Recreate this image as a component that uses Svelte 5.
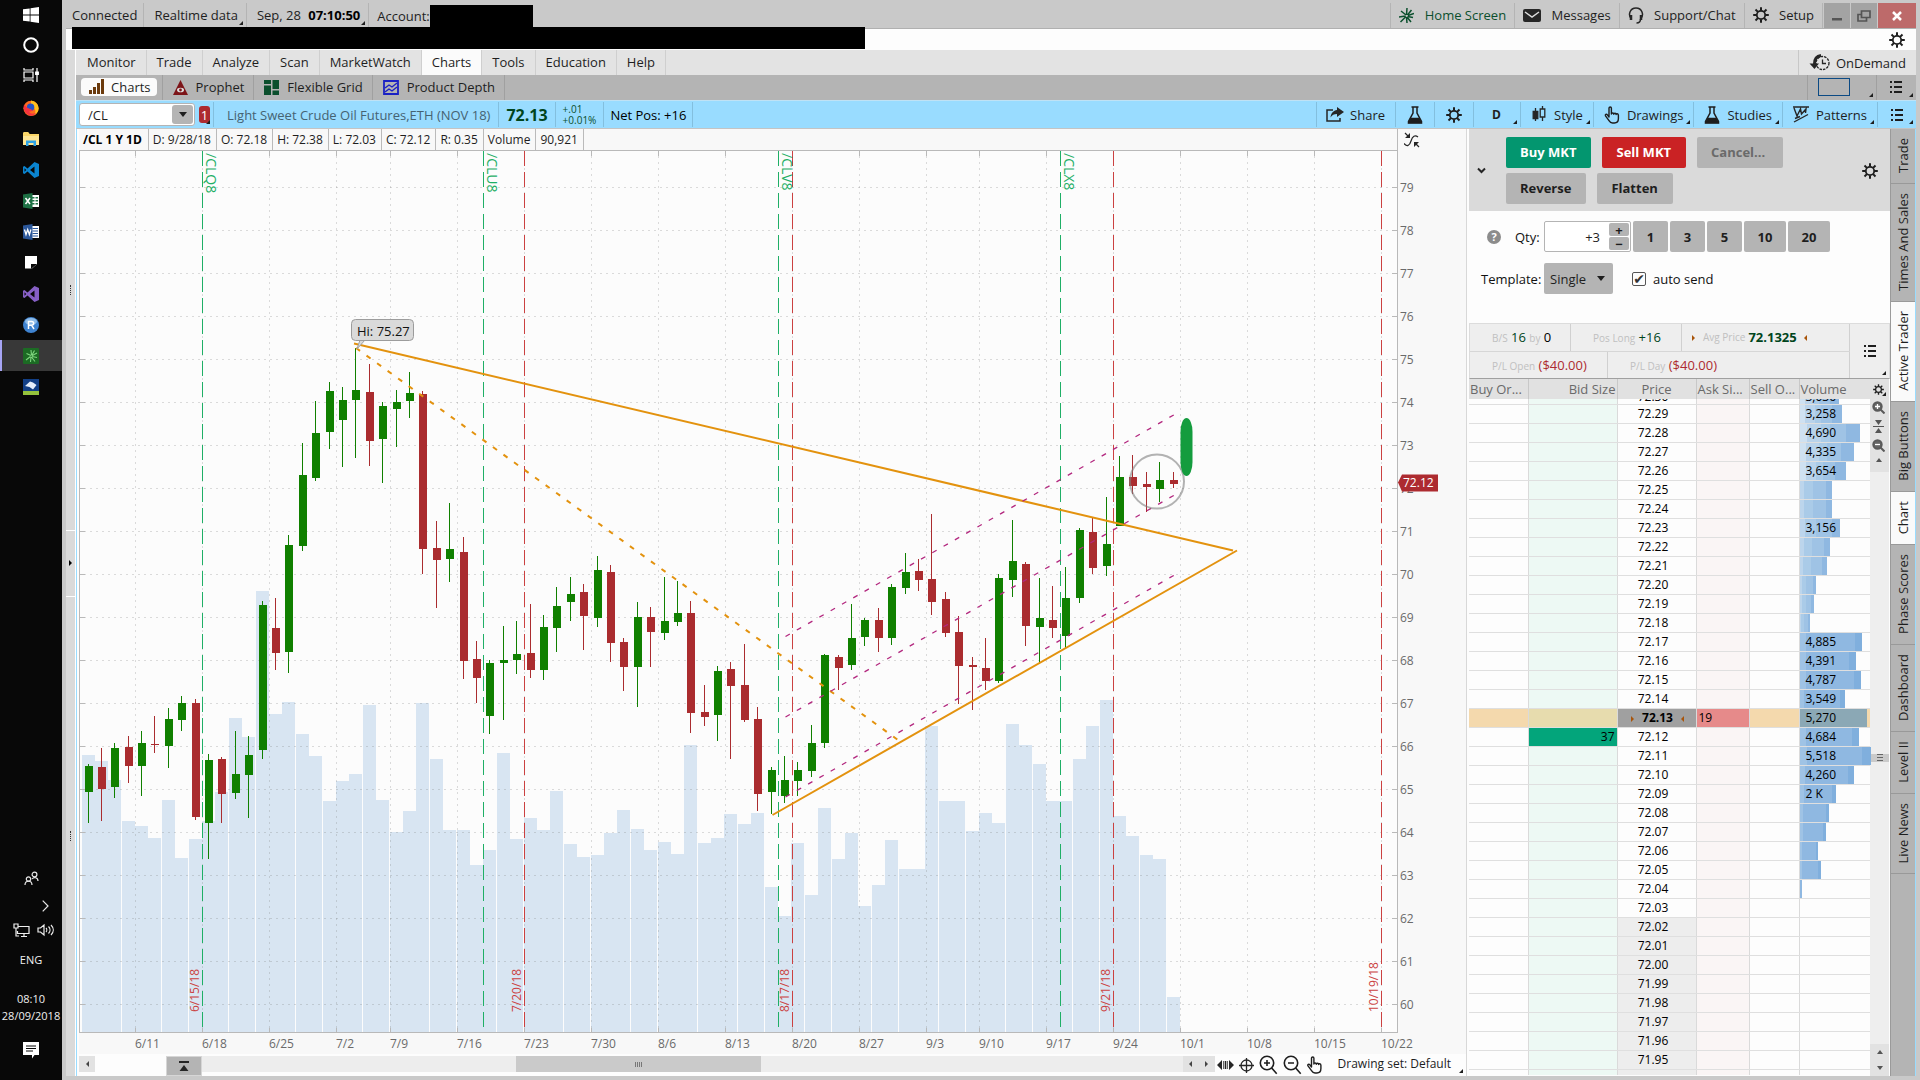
<script lang="ts">
  type Candle = [up: number, high: number, bodyTop: number, bodyBottom: number, low: number, volume: number];

  let symbol = $state('/CL');
  let qty = $state('+3');
  let template = $state('Single');
  let autoSend = $state(true);

  const menu = ['Monitor', 'Trade', 'Analyze', 'Scan', 'MarketWatch', 'Charts', 'Tools', 'Education', 'Help'];
  const info = ['D: 9/28/18', 'O: 72.18', 'H: 72.38', 'L: 72.03', 'C: 72.12', 'R: 0.35', 'Volume', '90,921'];
  const sizes = [1, 3, 5, 10, 20];
  const sideTabs = ['Trade', 'Times And Sales', 'Active Trader', 'Big Buttons', 'Chart', 'Phase Scores', 'Dashboard', 'Level II', 'Live News'];
  const openTabs = ['Active Trader', 'Chart'];

  // one entry per session: direction, wick top, body top, body bottom, wick bottom, volume top
  const candles: Candle[] = [
    [1, 764, 766, 792, 823, 755], [0, 748, 767, 789, 821, 761], [1, 743, 748, 787, 798, 780],
    [0, 736, 747, 766, 783, 821], [1, 731, 743, 766, 796, 826], [0, 716, 744, 745, 753, 838],
    [1, 708, 719, 746, 768, 800], [1, 696, 703, 720, 731, 858], [0, 699, 703, 817, 820, 839],
    [1, 754, 760, 823, 859, 821], [0, 757, 759, 794, 823, 792], [1, 731, 774, 793, 799, 718],
    [1, 736, 755, 775, 818, 737], [1, 601, 605, 750, 759, 591], [0, 598, 628, 653, 670, 714],
    [1, 535, 545, 652, 673, 702], [1, 443, 475, 546, 551, 734], [1, 401, 433, 478, 481, 756],
    [1, 382, 391, 432, 449, 801], [1, 387, 400, 420, 467, 781], [1, 348, 390, 400, 458, 774],
    [0, 364, 392, 441, 466, 705], [1, 402, 406, 439, 483, 800], [1, 390, 402, 409, 447, 832],
    [1, 372, 393, 401, 418, 811], [0, 391, 394, 549, 574, 703], [0, 521, 548, 560, 608, 759],
    [1, 503, 549, 559, 582, 830], [0, 537, 552, 661, 679, 830], [0, 641, 659, 678, 703, 865],
    [1, 660, 663, 716, 734, 850], [1, 626, 660, 663, 720, 753], [1, 621, 654, 660, 674, 839],
    [0, 604, 653, 670, 678, 818], [1, 615, 627, 670, 680, 830], [1, 587, 606, 628, 652, 791],
    [1, 577, 594, 602, 621, 844], [0, 584, 592, 616, 650, 857], [1, 556, 570, 618, 627, 855],
    [0, 565, 572, 643, 662, 833], [0, 638, 642, 667, 691, 810], [1, 602, 617, 667, 707, 829],
    [0, 607, 617, 632, 667, 850], [1, 577, 621, 633, 640, 842], [1, 581, 613, 622, 626, 854],
    [0, 601, 613, 713, 733, 745], [0, 685, 712, 717, 726, 843], [1, 666, 671, 715, 741, 838],
    [0, 662, 669, 686, 759, 814], [0, 644, 685, 720, 722, 824], [0, 707, 719, 794, 811, 813],
    [1, 767, 770, 792, 814, 887], [1, 756, 780, 796, 803, 916], [1, 762, 770, 781, 796, 843],
    [1, 725, 743, 771, 777, 895], [1, 654, 655, 743, 748, 808], [0, 655, 657, 668, 690, 859],
    [1, 604, 638, 665, 670, 833], [1, 618, 620, 637, 646, 906], [0, 608, 620, 638, 652, 885],
    [1, 584, 587, 638, 645, 840], [1, 553, 572, 588, 594, 869], [0, 559, 571, 580, 591, 869],
    [0, 514, 579, 602, 615, 726], [0, 592, 599, 633, 637, 801], [0, 616, 632, 666, 704, 801],
    [0, 657, 665, 667, 710, 831], [0, 638, 668, 681, 690, 813], [1, 574, 578, 681, 683, 823],
    [1, 520, 561, 580, 597, 724], [0, 562, 564, 626, 646, 745], [1, 578, 618, 627, 664, 764],
    [0, 586, 620, 628, 638, 801], [1, 567, 598, 636, 649, 801], [1, 528, 530, 598, 603, 759],
    [0, 518, 532, 568, 574, 726], [1, 497, 544, 566, 576, 700], [1, 456, 477, 526, 526, 816],
    [0, 455, 477, 486, 494, 836], [0, 472, 484, 487, 512, 855], [1, 462, 480, 489, 502, 859],
    [0, 472, 480, 484, 488, 997]
  ];
  const bars = candles.map((c, i) => ({
    x: Math.floor(88.02 + i * 13.395),
    color: c[0] ? '#108000' : '#aa2c2f',
    high: c[1], top: c[2], bottom: c[3], low: c[4], volume: c[5]
  }));

  const weeks: [string, number][] = [
    ['6/11', 135], ['6/18', 202], ['6/25', 269], ['7/2', 336], ['7/9', 390], ['7/16', 457], ['7/23', 524],
    ['7/30', 591], ['8/6', 658], ['8/13', 725], ['8/20', 792], ['8/27', 859], ['9/3', 926], ['9/10', 979],
    ['9/17', 1046], ['9/24', 1113], ['10/1', 1180], ['10/8', 1247], ['10/15', 1314], ['10/22', 1381]
  ];
  const prices = Array.from({ length: 20 }, (_, i) => ({ label: 79 - i, y: 187 + i * 43 }));
  const expirations: [string, number][] = [['6/15/18', 202], ['7/20/18', 524], ['8/17/18', 792], ['9/21/18', 1113], ['10/19/18', 1381]];
  const contracts: [string, number][] = [['/CLQ8', 202], ['/CLU8', 483], ['/CLV8', 778], ['/CLX8', 1060]];

  // price ladder, top row is 72.29
  const ladderVolume: [string, number][] = [
    ['3,258', 42], ['4,690', 60], ['4,335', 54], ['3,654', 46], ['', 32], ['', 32], ['3,156', 40], ['', 30], ['', 27],
    ['', 16], ['', 14], ['', 10], ['4,885', 62], ['4,391', 56], ['4,787', 61], ['3,549', 45], ['5,270', 67],
    ['4,684', 59], ['5,518', 71], ['4,260', 54], ['2 K', 36], ['', 29], ['', 26], ['', 18], ['', 21], ['', 2]
  ];
  const ladder = Array.from({ length: 35 }, (_, i) => ({
    price: (72.29 - i * 0.01).toFixed(2),
    bid: i === 17 ? '37' : '',
    ask: i === 16 ? '19' : '',
    volume: ladderVolume[i]?.[0] ?? '',
    width: ladderVolume[i]?.[1] ?? 0,
    tone: i < 4 ? 'pale' : i < 12 ? 'soft' : 'full',
    last: i === 16,
    outside: i > 26
  }));
</script>

{#snippet gear(size = 16)}
  <svg width={size} height={size} viewBox="0 0 16 16" fill="none" stroke="currentColor">
    <circle cx="8" cy="8" r="4.200" stroke-width="1.8" />
    <path d="M8 .2v3.300M8 12.500v3.300M.2 8h3.300M12.500 8h3.300M2.500 2.500l2.400 2.400M11.100 11.100l2.400 2.400M2.500 13.500l2.400-2.400M11.100 4.900l2.400-2.400" stroke-width="2" />
  </svg>
{/snippet}

{#snippet listIcon()}
  <svg width="12" height="12" viewBox="0 0 12 12" fill="currentColor">
    <path d="M0 0h2v2H0zM0 5h2v2H0zM0 10h2v2H0zM4 0h8v2H4zM4 5h8v2H4zM4 10h8v2H4z" />
  </svg>
{/snippet}

{#snippet flask()}
  <svg width="16" height="18" viewBox="0 0 16 18" fill="none" stroke="currentColor" stroke-width="1.5">
    <path d="M4.500 1h7M6 1v6L1.500 15.500v1.500h13v-1.500L10 7V1" />
    <path d="M4 12.500h8l2 4H2z" fill="currentColor" />
  </svg>
{/snippet}

{#snippet hand()}
  <svg width="15" height="18" viewBox="0 0 15 18" fill="none" stroke="currentColor" stroke-width="1.4" stroke-linejoin="round">
    <path d="M4.500 11V2.200c0-1.700 2.400-1.700 2.400 0V8c0-1.400 2.400-1.400 2.400.2 0-1.300 2.300-1.200 2.300.4 0-1.200 2.300-1.100 2.300.6v3.300c0 3-1.500 4.500-4 4.500H8c-1.600 0-2.600-.8-3.500-2.300L1 9.900c-.7-1.300.9-2.200 1.900-1z" />
  </svg>
{/snippet}

{#snippet magnifier(plus: boolean)}
  <svg width="19" height="20" viewBox="0 0 19 20" fill="none" stroke="currentColor" stroke-width="1.6">
    <circle cx="8" cy="8" r="6.700" />
    <path d="M12.700 13l5 5.800M5 8h6" />
    {#if plus}<path d="M8 5v6" />{/if}
  </svg>
{/snippet}

<div class="desktop">
  <nav class="taskbar" aria-label="Taskbar">
    <button class="tall" aria-label="Start">
      <svg width="16" height="16" viewBox="0 0 16 16" fill="#fff"><path d="M0 2.300 6.700 1.400v6.200H0zM7.500 1.300 16 0v7.600H7.500zM0 8.400h6.700v6.200L0 13.700zM7.500 8.400H16V16l-8.500-1.300z" /></svg>
    </button>
    <button class="tall" aria-label="Search">
      <svg width="16" height="16" viewBox="0 0 16 16" fill="none" stroke="#fff" stroke-width="2"><circle cx="8" cy="8" r="6.800" /></svg>
    </button>
    <button class="tall" aria-label="Task view">
      <svg width="16" height="16" viewBox="0 0 16 16" fill="none" stroke="#fff" stroke-width="1.200"><path d="M1 1v2h9V1M1 15v-2h9v2M1 5h9v6H1zM14 1v14" /><path d="M12.700 5h2.600v2.500h-2.600z" fill="#fff" /></svg>
    </button>
    <button aria-label="Firefox">
      <svg width="16" height="16" viewBox="0 0 16 16"><circle cx="8" cy="8.300" r="7.600" fill="#ff6a1f" /><path d="M8 .6c5 1 7.600 4 7.600 8 0 3-2 5.700-4.700 6.800C14 11 12 8 8 5z" fill="#ffc01e" /><circle cx="7.600" cy="7.200" r="3.700" fill="#2554c7" /><path d="M1 4.500C0 9 1.500 14.500 8 15.800c3 0 4.500-1.500 5-3-3 1.600-6 1-7-1.300 2 .3 2.800-.8 4-1-2-2-5-1.500-6.500-3.500z" fill="#f5333f" /></svg>
    </button>
    <button aria-label="File Explorer">
      <svg width="16" height="14" viewBox="0 0 16 14"><path d="M0 1.500C0 .7.5 0 1.200 0h4l1.500 2H16v11H0z" fill="#fbd667" /><path d="M0 4h16v9H0z" fill="#ffe694" /><path d="M3 14V8.500h10V14h-2.500v-3h-5v3z" fill="#2ea3e6" /></svg>
    </button>
    <button aria-label="Visual Studio Code">
      <svg width="16" height="16" viewBox="0 0 16 16" fill="#0a84d0"><path d="M11.500 0 16 2v12l-4.500 2L4.500 9.500 1.500 12 0 11.200V4.800L1.500 4l3 2.500zM11.500 4.600 7 8l4.500 3.400zM1.500 6.300v3.400L3.200 8z" fill-rule="evenodd" /></svg>
    </button>
    <button aria-label="Excel">
      <svg width="16" height="16" viewBox="0 0 16 16"><path d="M8 2h8v12H8z" fill="#fff" /><path d="M9 4h2.500v1.500H9zM12.500 4H15v1.500h-2.500zM9 7h2.500v1.500H9zM12.500 7H15v1.500h-2.500zM9 10h2.500v1.500H9zM12.500 10H15v1.500h-2.500z" fill="#217346" /><path d="M0 1.500 9.500 0v16L0 14.500z" fill="#1d7044" /><path d="m2.500 5 4.500 6M7 5l-4.500 6" stroke="#fff" stroke-width="1.500" /></svg>
    </button>
    <button aria-label="Word">
      <svg width="16" height="16" viewBox="0 0 16 16"><path d="M8 2h8v12H8z" fill="#fff" /><path d="M9.500 4.500H15M9.500 7H15M9.500 9.500H15M9.500 12H15" stroke="#2b579a" /><path d="M0 1.500 9.500 0v16L0 14.500z" fill="#2b579a" /><path d="m1.500 5.500 1.500 5 1.700-5 1.700 5 1.500-5" stroke="#fff" stroke-width="1.300" fill="none" /></svg>
    </button>
    <button aria-label="Sticky Notes">
      <svg width="12" height="13" viewBox="0 0 12 13"><path d="M0 0h12v8L7 12.500H0z" fill="#fff" /><path d="M6 8h6l-6 5z" fill="#080808" /></svg>
    </button>
    <button aria-label="Visual Studio">
      <svg width="16" height="16" viewBox="0 0 16 16" fill="#865fc5"><path d="M11.500 0 16 2v12l-4.500 2L4.500 9.500 1.500 12 0 11.200V4.800L1.500 4l3 2.500zM11.500 4.600 7 8l4.500 3.400zM1.500 6.300v3.400L3.200 8z" fill-rule="evenodd" /></svg>
    </button>
    <button aria-label="RStudio">
      <svg width="16" height="16" viewBox="0 0 16 16"><circle cx="8" cy="8" r="8" fill="#3f83d0" /><ellipse cx="8" cy="4.500" rx="6" ry="3.500" fill="#8fbce9" /><path d="M5.500 12V4.500h3.200c2.600 0 2.600 3.700 0 3.700H5.500m3 0 2.500 3.800" stroke="#fff" stroke-width="1.500" fill="none" /></svg>
    </button>
    <button class="running" aria-label="Thinkorswim">
      <svg width="16" height="16" viewBox="0 0 16 16"><rect width="16" height="16" rx="1" fill="#1c6b24" /><path d="M8.500 8 14 5M9 8.500l5 1M8.500 9l3.500 4.500M8 9l-.5 5M7.500 8.500 3 12M8 7.500 3.500 5.500M8.500 7 8 2M9 7l2.500-4.500" stroke="#7fd67f" stroke-width="1.100" /></svg>
    </button>
    <button aria-label="Remote viewer">
      <svg width="16" height="16" viewBox="0 0 16 16"><path d="M0 0h16v16H0z" fill="#123f86" /><path d="M0 12h16v4H0z" fill="#94c23c" /><path d="m2 7 5-4.500 3 1L13.500 6 10 10.500 6.500 8z" fill="#e5eefb" /></svg>
    </button>

    <div class="tray">
      <button aria-label="People">
        <svg width="15" height="15" viewBox="0 0 15 15" fill="none" stroke="#e8e8e8" stroke-width="1.200"><circle cx="10.500" cy="3.500" r="2.400" /><circle cx="4.500" cy="8" r="2.200" /><path d="M1 14c0-5 7-5 7 0M8 8c2-2.500 6-1.500 6 2" /></svg>
      </button>
      <button class="chevron" aria-label="Hidden icons">
        <svg width="7" height="12" viewBox="0 0 7 12" fill="none" stroke="#e8e8e8" stroke-width="1.200"><path d="m.7.7 5.300 5.300L.7 11.300" /></svg>
      </button>
      <div class="tray-row">
        <svg width="17" height="14" viewBox="0 0 17 14" fill="none" stroke="#eee" stroke-width="1.200"><path d="M5 3.500h11v7H4.500V8M8 13.500h6M11 10.500v3M1 1h4v4H1zM3 5v8h3" /></svg>
        <svg width="18" height="14" viewBox="0 0 18 14" fill="none" stroke="#eee" stroke-width="1.200"><path d="M1 5h2.500L7 2v10L3.500 9H1zM9 5c1 1 1 3 0 4M11.500 3.500c2 2 2 5 0 7M14 2c3 3 3 7 0 10" /></svg>
      </div>
      <span class="lang">ENG</span>
      <span class="clock">08:10<br />28/09/2018</span>
      <button aria-label="Notifications">
        <svg width="16" height="17" viewBox="0 0 16 17"><path d="M0 0h16v13h-4.500L9 16.500V13H0z" fill="#fff" /><path d="M3 4h10M3 6.500h10M3 9h7" stroke="#080808" /></svg>
      </button>
    </div>
  </nav>

  <div class="app">
    <header class="topbar">
      <span class="cell">Connected</span>
      <button class="cell corner">Realtime data</button>
      <button class="cell corner">Sep, 28 <b>07:10:50</b></button>
      <span class="cell account">Account:<span class="hidden-account"></span></span>
      <span class="grow"></span>
      <button class="cell home">
        <svg width="15" height="17" viewBox="0 0 15 17" stroke="#0b4f2d" stroke-width="1.500"><path d="M7.500 8 8 1M8.500 8l4-5M9 8.500l6-2M8.500 9.500l5.500 1M8 10l4 5M7.500 10l.5 6M7 9.500 1.500 15M6.500 9 0 10M7 8 2 4" /></svg>
        Home Screen
      </button>
      <button class="cell">
        <svg width="18" height="13" viewBox="0 0 18 13"><rect width="18" height="13" rx="2" fill="#262626" /><path d="m2 3 7 5 7-5" stroke="#ddd" stroke-width="1.500" fill="none" /></svg>
        Messages
      </button>
      <button class="cell">
        <svg width="16" height="17" viewBox="0 0 16 17" fill="none" stroke="#262626" stroke-width="1.500"><path d="M3.500 12C-.5 8 2 1 8 1s8.500 7 4.500 11M12.500 12c0 3-1 4-4 4" /><path d="M3 8v5M13 8v5" stroke-width="2.500" /></svg>
        Support/Chat
      </button>
      <button class="cell">{@render gear()} Setup</button>
      <button class="win" aria-label="Minimize"><svg width="10" height="10" viewBox="0 0 10 10"><path d="M0 7h10v2.500H0z" fill="#555" /></svg></button>
      <button class="win" aria-label="Restore"><svg width="14" height="12" viewBox="0 0 14 12" fill="none" stroke="#555" stroke-width="1.700"><path d="M4.500 1h8.500v6.500H4.500zM4 4.500H1V11h8.500V8" /></svg></button>
      <button class="win close" aria-label="Close"><svg width="10" height="10" viewBox="0 0 10 10" stroke="#fff" stroke-width="2.500"><path d="m1 1 8 8M9 1 1 9" /></svg></button>
    </header>

    <div class="notice">
      <div class="hidden-notice"></div>
      <button class="bare" aria-label="Layout settings">{@render gear()}</button>
    </div>

    <div class="body">
      <aside class="gutter">
        <div><span class="grip"></span></div>
        <button aria-label="Expand left area"></button>
        <div><span class="grip"></span></div>
      </aside>

      <main>
        <nav class="menu">
          {#each menu as item}
            <button class:active={item === 'Charts'}>{item}</button>
          {/each}
          <button class="ondemand">
            <svg width="21" height="17" viewBox="0 0 21 17" fill="none" stroke="#262626"><circle cx="13.500" cy="9" r="6.500" stroke-width="1.300" stroke-dasharray="2.500 1" /><path d="M13.500 5.500V9.500H17" stroke-width="1.300" /><path d="M12 1.500C7.500 2 5.500 5 5.500 10" stroke-width="3" /><path d="M.5 9.500H10L5.500 15z" fill="#262626" stroke="none" /></svg>
            OnDemand
          </button>
        </nav>

        <nav class="subtabs">
          <button><span class="pill">
            <svg width="15" height="15" viewBox="0 0 15 15" fill="#6b3a0c"><path d="M0 11h3v4H0zM4 8h3v7H4zM8 4h3v11H8zM12 0h3v15h-3z" /></svg>
            Charts</span></button>
          <button>
            <svg width="15" height="15" viewBox="0 0 15 15"><path d="M7.500 0 15 15H0z" fill="#7d1519" /><ellipse cx="7.500" cy="10" rx="3.500" ry="2.300" fill="#ddd" /><circle cx="7.500" cy="10" r="1.400" fill="#7d1519" /></svg>
            Prophet</button>
          <button>
            <svg width="15" height="15" viewBox="0 0 15 15" fill="#0b4f2d"><path d="M0 0h7v4H0zM0 5.500h7V15H0zM8.500 0H15v9H8.500zM8.500 10.500H15V15H8.500z" /></svg>
            Flexible Grid</button>
          <button>
            <svg width="16" height="15" viewBox="0 0 16 15" fill="none" stroke="#1a21c4" stroke-width="1.800"><path d="M1 1h14v13H1z" /><path d="m2 8 4-3 3 2 5-4M2 12l4-3 3 2 5-4" stroke-width="1.400" /></svg>
            Product Depth</button>
          <span class="grow"></span>
          <button class="corner layout" aria-label="Grid layout"><span></span></button>
          <button class="corner list" aria-label="Tab list">{@render listIcon()}</button>
        </nav>

        <div class="symbolbar">
          <div class="symbol">
            <input aria-label="Symbol" bind:value={symbol} />
            <button aria-label="Symbol list"></button>
          </div>
          <button class="link corner" aria-label="Link color 1">1</button>
          <span class="cell name">Light Sweet Crude Oil Futures,ETH (NOV 18)</span>
          <b class="cell last">72.13</b>
          <span class="cell change"><span>+.01</span><span>+0.01%</span></span>
          <span class="cell net">Net Pos: +16</span>
          <span class="grow"></span>
          <button class="tool">
            <svg width="18" height="15" viewBox="0 0 18 15" fill="none" stroke="#262626" stroke-width="1.500"><path d="M7 3H1v11h13v-3" /><path d="M11 0l7 5-7 5V7C8 7 6 8 4.500 10.500 5 6 7.500 3.500 11 3z" fill="#262626" stroke="none" /></svg>
            Share</button>
          <button class="tool icon" aria-label="Edit studies">{@render flask()}</button>
          <button class="tool icon" aria-label="Chart settings">{@render gear()}</button>
          <button class="tool corner period"><b>D</b></button>
          <button class="tool corner">
            <svg width="13" height="17" viewBox="0 0 13 17" fill="none" stroke="#262626" stroke-width="1.300"><path d="M3 2v13M10 0v3M10 11v4" /><path d="M.7 5.500h4.600v7H.7z" fill="#262626" /><path d="M7.700 3h4.600v8H7.700z" /></svg>
            Style</button>
          <button class="tool corner">{@render hand()} Drawings</button>
          <button class="tool corner">{@render flask()} Studies</button>
          <button class="tool corner">
            <svg width="16" height="17" viewBox="0 0 16 17" fill="none" stroke="#262626" stroke-width="1.400"><path d="M0 1h16M1 2l3 8 3.500-7 1 5L13 3l-.5 4M1 16l14-7.500M2 12.500l5-2" /></svg>
            Patterns</button>
          <button class="tool corner list" aria-label="Chart menu">{@render listIcon()}</button>
        </div>

        <div class="workspace">
          <section class="chart">
            <div class="info">
              <b>/CL 1 Y 1D</b>
              {#each info as value}<span>{value}</span>{/each}
              <button class="bare" aria-label="Toggle axis">
                <svg width="16" height="16" viewBox="0 0 16 16" fill="none" stroke="#262626" stroke-width="1.200"><path d="M0 11.500c3 3.500 5.500 2.500 7-2.500s4-6.500 7-4M1 1l4 4M15 15l-4-4" /><path d="M6 1v5H1zM10 10h5l-5 5z" fill="#262626" stroke="none" /></svg>
              </button>
            </div>

            <svg class="plot" viewBox="79 150 1387 904" preserveAspectRatio="xMinYMin meet" role="img" aria-label="Daily price chart">
              <rect x="79" y="150" width="1387" height="904" fill="#f8f8f8" />
              <rect x="79" y="150" width="1319" height="883" fill="#fcfcfc" />

              {#each bars as bar}
                <rect x={bar.x - 6} y={bar.volume} width="13" height={1032 - bar.volume} fill="#d8e5f2" />
              {/each}

              <g stroke="#808080" stroke-opacity=".55" stroke-dasharray="1 5">
                {#each prices as p}<path d="M84.500 {p.y + 0.5}H1392" />{/each}
                {#each weeks as [, x]}<path d="M{x + 0.5} 156.500V1028" />{/each}
              </g>
              <g stroke="#b9b9b9">
                {#each prices as p}<path d="M80 {p.y + 0.5}h5M1392 {p.y + 0.5}h5" />{/each}
                {#each weeks as [, x]}<path d="M{x + 0.5} 151v5M{x + 0.5} 1028v4" />{/each}
                <rect x="79.500" y="150.500" width="1318" height="882" fill="none" />
              </g>

              <g stroke-dasharray="15 6">
                {#each expirations as [, x]}<path d="M{x + 0.5} 151V1032" stroke="#cb4141" />{/each}
                {#each contracts as [, x]}<path d="M{x + 0.5} 151V1032" stroke="#1faf66" />{/each}
              </g>
              {#each contracts as [name, x]}
                <text class="contract" transform="translate({x + 4} 153) rotate(90)">{name}</text>
              {/each}
              {#each expirations as [name, x]}
                <text transform="translate({x - 3} 1012) rotate(-90)" fill="#cb4141">{name}</text>
              {/each}

              {#each bars as bar}
                <rect x={bar.x} y={bar.high} width="1" height={bar.low - bar.high} fill={bar.color} />
                <rect x={bar.x - 3} y={bar.top} width="8" height={bar.bottom - bar.top} fill={bar.color} />
              {/each}

              <g fill="none" stroke="#e3920e" stroke-width="2">
                <path d="M354 343.500 1233 550.500M772.500 815 1237 550.500" />
                <path d="M356 348 898 740" stroke-dasharray="5 8" />
              </g>
              <path d="M785.500 636.500 1174.500 414.500M785.500 717 1174.500 495M785.500 797 1174.500 575" fill="none" stroke="#b3287f" stroke-width="1.300" stroke-dasharray="5 8" />
              <circle cx="1157" cy="481.500" r="27" fill="none" stroke="#808080" stroke-opacity=".6" stroke-width="2" />
              <rect x="1180.500" y="418" width="12" height="58" rx="6" ry="14" fill="#149c3e" />

              <path d="m357 349 3-9h5z" fill="#dadada" stroke="#a0a0a0" />
              <rect x="351.500" y="319.500" width="62" height="21" rx="4" fill="#dadada" stroke="#9c9c9c" />
              <text class="callout" x="357" y="336">Hi: 75.27</text>

              <g fill="#6a6a6a">
                {#each weeks as [label, x]}<text {x} y="1048">{label}</text>{/each}
                {#each prices as p}<text x="1400" y={p.y + 5}>{p.label}</text>{/each}
              </g>
              <path d="m1398 482.500 4-8h36v17h-36z" fill="#ad2b30" />
              <text x="1403" y="487" fill="#fff">72.12</text>
            </svg>

            <footer class="chart-foot">
              <button class="arrow left" aria-label="Scroll left"></button>
              <button class="raise" aria-label="Raise panel">
                <svg width="10" height="10" viewBox="0 0 10 10"><path d="M0 0h10v2H0zM5 4l4.500 6h-9z" fill="#262626" /></svg>
              </button>
              <div class="track"><span class="thumb"></span></div>
              <button class="arrow left" aria-label="Step left"></button>
              <button class="arrow right" aria-label="Step right"></button>
              <div class="zoom">
                <svg width="17" height="10" viewBox="0 0 17 10" fill="#262626"><path d="M5 0v10L0 5zM12 0v10l5-5zM6.300 1h1v8h-1zM9.700 1h1v8h-1zM8 1h1v8H8z" /></svg>
                <svg width="15" height="15" viewBox="0 0 15 15" fill="none" stroke="#262626" stroke-width="1.300"><circle cx="7.500" cy="7.500" r="5.500" /><path d="M7.500 0v15M0 7.500h15" /></svg>
                {@render magnifier(true)}
                {@render magnifier(false)}
                {@render hand()}
              </div>
              <button class="corner drawing-set">Drawing set: Default</button>
            </footer>
          </section>

          <section class="trader">
            <div class="orders">
              <button class="bare" aria-label="Collapse"><svg width="9" height="7" viewBox="0 0 9 7" fill="none" stroke="#262626" stroke-width="2"><path d="m1 1.500 3.500 3.500L8 1.500" /></svg></button>
              <div class="order-buttons">
                <button class="buy">Buy MKT</button>
                <button class="sell">Sell MKT</button>
                <button disabled>Cancel...</button>
                <button>Reverse</button>
                <button>Flatten</button>
              </div>
              <button class="bare" aria-label="Trader settings">{@render gear()}</button>
            </div>

            <div class="entry">
              <div class="entry-row">
                <span class="help">?</span>
                <label class="short" for="qty">Qty:</label>
                <div class="qty">
                  <input id="qty" bind:value={qty} />
                  <div><button aria-label="More">+</button><button aria-label="Less">−</button></div>
                </div>
                {#each sizes as size}
                  <button class="size" class:wide={size > 9}>{size}</button>
                {/each}
              </div>
              <div class="entry-row">
                <label class="long" for="template">Template:</label>
                <div class="template">
                  <select id="template" bind:value={template}>
                    <option>Single</option>
                  </select>
                </div>
                <label class="auto">
                  <input type="checkbox" bind:checked={autoSend} />
                  auto send
                </label>
              </div>
            </div>

            <div class="position">
              <div class="figures">
                <div>
                  <span class="bs"><small>B/S</small> <i>16</i> <small>by</small> 0</span>
                  <span class="pos"><small>Pos Long</small> <i>+16</i></span>
                  <span class="avg"><small>Avg Price</small> <b>72.1325</b></span>
                </div>
                <div>
                  <span class="open"><small>P/L Open</small> <em>($40.00)</em></span>
                  <span class="day"><small>P/L Day</small> <em>($40.00)</em></span>
                </div>
              </div>
              <button class="corner" aria-label="Position list">{@render listIcon()}</button>
            </div>

            <div class="ladder">
              <table>
                <colgroup><col class="c1" /><col class="c2" /><col class="c3" /><col class="c4" /><col class="c5" /><col class="c6" /></colgroup>
                <thead>
                  <tr><th>Buy Or...</th><th class="right">Bid Size</th><th class="center">Price</th><th>Ask Si...</th><th>Sell O...</th><th>Volume</th></tr>
                </thead>
                <tbody>
                  <tr class="cut">
                    <td></td><td class="bid"></td>
                    <td class="price"><span>72.30</span></td>
                    <td class="ask"></td><td></td>
                    <td class="volume"><div class="bar pale" style="width: 39px"></div><span>3,036</span></td>
                  </tr>
                  {#each ladder as row (row.price)}
                    <tr class:last={row.last}>
                      <td></td>
                      <td class="bid" class:filled={row.bid}>{row.bid}</td>
                      <td class="price" class:outside={row.outside}>{row.price}</td>
                      <td class="ask" class:filled={row.ask}>{row.ask}</td>
                      <td></td>
                      <td class="volume"><div class="bar {row.tone}" style="width: {row.width}px"></div><span>{row.volume}</span></td>
                    </tr>
                  {/each}
                  <tr class="rest"><td></td><td class="bid"></td><td class="price outside"></td><td class="ask"></td><td></td><td></td></tr>
                </tbody>
              </table>
              <div class="rail">
                <button class="corner rail-head" aria-label="Columns">{@render gear(11)}</button>
                <div class="rail-tools">
                  <svg width="13" height="13" viewBox="0 0 13 13" fill="none" stroke="#5a5a5a" stroke-width="2"><circle cx="5.500" cy="5.500" r="4.200" fill="#666" /><path d="m8.500 8.500 4 4" /><path d="M3 5.500h5M5.500 3v5" stroke="#fff" stroke-width="1.300" /></svg>
                  <svg width="11" height="13" viewBox="0 0 11 13" fill="#555"><path d="M2 0h7L5.500 5zM2 13h7L5.500 8zM0 6h11v1H0z" /></svg>
                  <svg width="13" height="13" viewBox="0 0 13 13" fill="none" stroke="#5a5a5a" stroke-width="2"><circle cx="5.500" cy="5.500" r="4.200" fill="#666" /><path d="m8.500 8.500 4 4" /><path d="M3 5.500h5" stroke="#fff" stroke-width="1.300" /></svg>
                  <svg width="6" height="4" viewBox="0 0 6 4" fill="#555"><path d="m3 0 3 4H0z" /></svg>
                </div>
                <div class="rail-track"><span></span></div>
                <div class="rail-end">
                  <svg width="6" height="4" viewBox="0 0 6 4" fill="#555"><path d="m3 0 3 4H0z" /></svg>
                  <svg width="6" height="4" viewBox="0 0 6 4" fill="#555"><path d="m3 4 3-4H0z" /></svg>
                </div>
              </div>
            </div>
          </section>

          <nav class="sidetabs">
            {#each sideTabs as tab}
              <button class:active={openTabs.includes(tab)}><span>{tab}</span></button>
            {/each}
          </nav>
        </div>
      </main>
    </div>
  </div>
</div>

<style>
  :global(body) {
    margin: 0;
    background: #c8c8c8;
  }

  .desktop {
    display: flex;
    min-height: 100vh;
    font: 13px/16px "Open Sans", "Noto Sans", sans-serif;
    color: #1e1e1e;
  }

  button, input, select {
    box-sizing: border-box;
    margin: 0;
    padding: 0;
    border: 0;
    border-radius: 0;
    background: none;
    font: inherit;
    color: inherit;
  }

  svg {
    flex: none;
    display: block;
  }

  .grow {
    flex: 1;
  }

  .bare {
    display: grid;
    place-items: center;
  }

  .corner {
    position: relative;
  }

  .corner::after {
    content: '';
    position: absolute;
    right: 3px;
    bottom: 3px;
    border: 2px solid #1e1e1e;
    border-top-color: transparent;
    border-left-color: transparent;
  }

  /* windows taskbar */
  .taskbar {
    display: flex;
    flex-direction: column;
    width: 62px;
    background: #080808;
    color: #f0f0f0;
    font-size: 11px;
  }

  .taskbar button {
    display: grid;
    place-items: center;
    height: 31px;
  }

  .taskbar button.tall {
    height: 30px;
  }

  .taskbar .tall + button:not(.tall) {
    margin-top: 2px;
  }

  .taskbar .running {
    background: #383838;
    border-left: 2px solid #a7a5f5;
    padding-right: 2px;
  }

  .tray {
    display: flex;
    flex-direction: column;
    margin-top: auto;
    padding-bottom: 14px;
    text-align: center;
  }

  .taskbar .chevron {
    height: 24px;
    padding-left: 28px;
  }

  .tray-row {
    display: flex;
    justify-content: center;
    gap: 7px;
    padding: 5px 0;
    margin-left: 5px;
  }

  .lang {
    padding: 10px 0 13px;
  }

  .clock {
    padding: 9px 0 11px;
    line-height: 17px;
  }

  /* window frame */
  .app {
    display: flex;
    flex: 1;
    flex-direction: column;
    min-width: 0;
    padding: 3px 4px 4px;
    background: #c9c9c9;
  }

  .topbar {
    display: flex;
    height: 25px;
    border-bottom: 1px solid #b0b0b0;
  }

  .topbar .cell {
    display: flex;
    align-items: center;
    gap: 7px;
    padding: 0 8px 1px;
    border-right: 1px solid #b4b4b4;
    white-space: pre;
  }

  .topbar .cell:first-child {
    padding: 0 6px 1px;
  }

  .topbar .corner {
    padding-left: 10px;
  }

  .topbar .corner b {
    margin-left: -3px;
    color: #000;
  }

  .topbar .account {
    gap: 0;
    padding-bottom: 0;
    border: 0;
  }

  .hidden-account {
    width: 103px;
    height: 22px;
    background: #000;
  }

  .topbar .home {
    border-left: 1px solid #b4b4b4;
    color: #0b4f2d;
  }

  .win {
    display: grid;
    place-items: center;
    width: 26px;
    margin-left: 1px;
    background: #a3a3a3;
  }

  .win.close {
    width: 38px;
    background: #bd6a6a;
  }

  .notice {
    display: flex;
    justify-content: space-between;
    height: 21px;
    padding: 0 11px 0 6px;
    background: #fdfdfd;
  }

  .hidden-notice {
    position: relative;
    width: 793px;
    height: 22px;
    margin-top: -2px;
    background: #000;
  }

  .body {
    display: flex;
    flex: 1;
    min-height: 0;
  }

  .gutter {
    display: flex;
    flex-direction: column;
    width: 9px;
    border-right: 1px solid #fff;
    background: #dadada;
  }

  .gutter div {
    display: grid;
    flex: 1;
    place-items: center;
  }

  .gutter button {
    display: grid;
    place-items: center;
    height: 67px;
    border: solid #fff;
    border-width: 1px 0;
  }

  .gutter button::after {
    content: '';
    border: solid transparent;
    border-width: 3px 0 3px 3px;
    border-left-color: #000;
  }

  .grip {
    height: 10px;
    border-left: 1px dotted #333;
  }

  main {
    display: flex;
    flex: 1;
    flex-direction: column;
    min-width: 0;
  }

  .menu {
    display: flex;
    height: 25px;
    background: #e3e3e3;
  }

  .menu button {
    padding: 0 10px 1px;
    border-right: 1px solid #cfcfcf;
  }

  .menu button:first-child {
    padding-left: 11px;
  }

  .menu .active {
    background: #fbfbfb;
  }

  .menu .ondemand {
    display: flex;
    align-items: center;
    gap: 6px;
    margin-left: auto;
    padding: 0 10px;
    border-right: 0;
    border-left: 1px solid #c8c8c8;
  }

  .subtabs {
    display: flex;
    height: 25px;
    background: #b4b4b4;
  }

  .subtabs button {
    display: flex;
    align-items: center;
    gap: 8px;
    padding: 0 9px 1px 10px;
    border-right: 1px solid #a0a0a0;
  }

  .subtabs button:first-child {
    padding: 0 5px 1px;
  }

  .pill {
    display: flex;
    gap: 7px;
    padding: 1px 6px 1px 8px;
    border-radius: 4px;
    background: #fbfbfb;
  }

  .subtabs .layout {
    width: 70px;
    border-left: 1px solid #a0a0a0;
  }

  .layout span {
    width: 30px;
    height: 16px;
    border: 1px solid #0b4a84;
  }

  .subtabs .list {
    width: 39px;
    padding: 0 13px 1px;
    border: 0;
  }

  .symbolbar {
    display: flex;
    height: 25px;
    padding: 1px 0;
    border-top: 1px solid #bfe2f5;
    border-bottom: 1px solid #c4c4c4;
    background: #99dcff;
  }

  .symbol {
    display: flex;
    box-sizing: border-box;
    width: 116px;
    height: 23px;
    margin: 1px 4px 0 3px;
    padding: 1px;
    border: 1px solid #b4b4b4;
    border-radius: 3px;
    background: #fff;
  }

  .symbol input {
    flex: 1;
    min-width: 0;
    padding-left: 7px;
  }

  .symbol button {
    display: grid;
    place-items: center;
    width: 21px;
    border-radius: 3px;
    background: #b4b4b4;
  }

  .symbol button::after,
  .template::after {
    content: '';
    border: solid transparent;
    border-width: 5px 4px 0;
    border-top-color: #1e1e1e;
  }

  .link {
    align-self: center;
    width: 11px;
    height: 17px;
    border-radius: 3px;
    background: #ad2b30;
    color: #fff;
  }

  .link::after {
    right: 0;
    bottom: -1px;
  }

  .symbolbar .cell {
    display: flex;
    align-items: center;
    padding: 0 6px;
    border-right: 1px solid #83bfde;
  }

  .symbolbar .name {
    margin-left: 3px;
    padding: 0 8px 0 13px;
    border-left: 1px solid #83bfde;
    color: #456373;
  }

  .symbolbar .last {
    padding: 0 7px;
    font-size: 16px;
    color: #00451c;
  }

  .symbolbar .change {
    flex-direction: column;
    align-items: flex-start;
    justify-content: center;
    padding: 0 7px;
    font-size: 10px;
    line-height: 11px;
    color: #0b4f2d;
  }

  .symbolbar .net {
    color: #000;
  }

  .tool {
    display: flex;
    align-items: center;
    gap: 6px;
    padding: 0 10px 0 9px;
    border-left: 1px solid #83bfde;
  }

  .tool :global(svg) {
    width: 18px;
  }

  .tool.icon {
    justify-content: center;
    width: 39px;
  }

  .tool.period {
    width: 47px;
    padding: 0 19px 0 18px;
    font-size: 12px;
  }

  .tool.list {
    width: 39px;
    padding: 0 10px;
  }

  .workspace {
    display: flex;
    flex: 1;
    border: solid #99dcff;
    border-width: 0 1px;
    background: #fdfdfd;
  }

  /* chart column */
  .chart {
    display: flex;
    flex: 1;
    flex-direction: column;
    min-width: 0;
    padding-left: 2px;
    border-right: 1px solid #d8d8d8;
  }

  .info {
    display: flex;
    height: 21px;
    background: #f8f8f8;
    font-size: 12px;
    line-height: 21px;
  }

  .info b {
    padding: 0 6px 0 4px;
    color: #000;
  }

  .info b, .info span {
    border-right: 1px solid #bababa;
  }

  .info span {
    padding: 0 5px 0 4px;
  }

  .info button {
    margin-left: auto;
    width: 69px;
    padding: 0 46px 0 6px;
    border-left: 1px solid #bababa;
  }

  .plot {
    width: 100%;
    flex: 1;
    font-size: 12px;
  }

  .contract {
    font-size: 14px;
    fill: #1faf66;
  }

  .callout {
    font-size: 13px;
    fill: #111;
  }

  .chart-foot {
    display: flex;
    height: 22px;
  }

  .arrow {
    display: grid;
    place-items: center;
    width: 16px;
    height: 16px;
    margin-top: 2px;
    background: #e2e2e2;
  }

  .arrow::after {
    content: '';
    border: 3px solid transparent;
  }

  .arrow.left::after {
    border-left: 0;
    border-right-color: #444;
  }

  .arrow.right::after {
    border-right: 0;
    border-left-color: #444;
  }

  .raise {
    display: grid;
    place-items: center;
    width: 36px;
    margin: 2px 0 0 71px;
    border: 1px solid #d6d6d6;
    background: #b4b4b4;
  }

  .track {
    flex: 1;
    height: 16px;
    margin-top: 2px;
    background: #ededed;
  }

  .thumb {
    display: block;
    width: 25%;
    height: 100%;
    margin-left: 32%;
    background: repeating-linear-gradient(90deg, #777 0 1px, #cacaca 1px 2px) center / 7px 5px no-repeat #cacaca;
  }

  .zoom {
    display: flex;
    align-items: center;
    gap: 5px;
    margin: 0 16px 0 2px;
  }

  .drawing-set {
    padding: 0 15px 2px 0;
    font-size: 12px;
  }

  /* active trader */
  .trader {
    display: flex;
    flex-direction: column;
    width: 421px;
    padding-left: 2px;
  }

  .orders {
    display: flex;
    gap: 20px;
    height: 67px;
    padding: 8px 12px 7px 8px;
    background: #dadada;
  }

  .order-buttons {
    display: flex;
    flex: 1;
    flex-wrap: wrap;
    gap: 5px 11px;
  }

  .order-buttons button {
    height: 31px;
    padding: 0 15px 1px 14px;
    border-radius: 2px;
    background: #b4b4b4;
    font-weight: 700;
  }

  .order-buttons .buy {
    background: #03966f;
    color: #fff;
  }

  .order-buttons .sell {
    background: #ca2224;
    color: #fff;
  }

  .order-buttons button:disabled {
    padding-right: 18px;
    color: #6a6a6a;
  }

  .entry {
    display: flex;
    flex-direction: column;
    gap: 11px;
    height: 102px;
    padding: 10px 0 0 12px;
  }

  .entry-row {
    display: flex;
    align-items: center;
    gap: 2px;
  }

  .help {
    width: 14px;
    margin: 0 12px 0 6px;
    border-radius: 7px;
    background: #8c8c8c;
    color: #fff;
    font-size: 11px;
    font-weight: 700;
    line-height: 14px;
    text-align: center;
  }

  .entry label {
    color: #111;
  }

  label.short {
    width: 27px;
  }

  label.long {
    width: 61px;
  }

  .qty {
    display: flex;
    box-sizing: border-box;
    width: 87px;
    height: 31px;
    padding: 1px;
    border: 1px solid #b4b4b4;
    border-radius: 2px;
    background: #fff;
  }

  .qty input {
    flex: 1;
    min-width: 0;
    padding-right: 9px;
    text-align: right;
  }

  .qty div {
    display: grid;
    gap: 1px;
    width: 20px;
  }

  .qty button {
    border-radius: 2px;
    background: #b4b4b4;
    font-weight: 700;
    line-height: 12px;
  }

  .size {
    width: 35px;
    height: 31px;
    border-radius: 2px;
    background: #b4b4b4;
    font-weight: 700;
  }

  .size.wide {
    width: 42px;
  }

  .template {
    display: flex;
    align-items: center;
    width: 69px;
    height: 31px;
    border-radius: 2px;
    background: #b4b4b4;
  }

  .template select {
    width: 53px;
    height: 31px;
    padding-left: 6px;
    appearance: none;
  }

  .auto {
    display: flex;
    align-items: center;
    gap: 7px;
    margin-left: 17px;
  }

  .auto input {
    appearance: none;
    display: grid;
    place-items: center;
    width: 14px;
    height: 14px;
    border: 1px solid #555;
    border-radius: 2px;
  }

  .auto input:checked::after {
    content: '✔';
    font: 14px/12px "DejaVu Sans", sans-serif;
    color: #333;
  }

  .position {
    display: flex;
    border: 1px solid #dcdcdc;
    border-bottom-color: #a0a0a0;
    background: #eee;
  }

  .figures {
    flex: 1;
  }

  .figures div {
    display: flex;
    height: 27px;
    align-items: stretch;
    white-space: nowrap;
  }

  .figures div + div {
    height: 26px;
    border-top: 1px solid #d6d6d6;
  }

  .figures span {
    box-sizing: border-box;
    padding-left: 22px;
    border-right: 1px solid #d0d0d0;
    line-height: 27px;
    color: #000;
  }

  .figures small {
    font-size: 10px;
    color: #c0c0c0;
  }

  .figures i, .figures b {
    color: #00451c;
    font-style: normal;
  }

  .figures em {
    color: #ad2b30;
    font-style: normal;
  }

  .figures .bs {
    width: 101px;
  }

  .figures .pos {
    width: 111px;
  }

  .figures .avg {
    flex: 1;
    display: flex;
    align-items: center;
    gap: 3px;
    padding-left: 10px;
  }

  .figures .avg::before, .figures .avg::after,
  .last .price::before, .last .price::after {
    content: '';
    margin-right: 5px;
    border: solid transparent;
    border-width: 3px 0 3px 3px;
    border-left-color: #a8540a;
  }

  .figures .avg::after {
    margin-left: 4px;
    border-width: 3px 3px 3px 0;
    border-right-color: #a8540a;
  }

  .figures .open {
    width: 138px;
  }

  .figures .day {
    flex: 1;
  }

  .position button {
    display: grid;
    place-items: center;
    width: 39px;
  }

  .ladder {
    display: flex;
    flex: 1;
  }

  table {
    flex: 1;
    table-layout: fixed;
    border-collapse: collapse;
    align-self: flex-start;
    line-height: 18px;
    color: #000;
  }

  .c1 { width: 59px; }
  .c2 { width: 89px; }
  .c3 { width: 79px; }
  .c4 { width: 53px; }
  .c5 { width: 50px; }
  .c6 { width: 71px; }

  th {
    height: 20px;
    padding: 0 1px;
    border-right: 1px solid #c8c8c8;
    background: #e1e1e1;
    color: #6a6a6a;
    font-weight: 400;
    text-align: left;
    white-space: nowrap;
  }

  th.right {
    text-align: right;
  }

  th.center {
    text-align: center;
  }

  th:last-child {
    border: 0;
  }

  td {
    height: 18px;
    padding: 0 2px;
    border-right: 1px solid #dadada;
    border-bottom: 1px solid #dfdfdf;
    font-size: 12px;
  }

  td:last-child {
    border-right: 0;
  }

  .bid {
    background: #edf9f4;
    text-align: right;
  }

  .bid.filled {
    background: #03a57b;
  }

  .ask {
    background: #faf5f5;
  }

  .price {
    text-align: center;
  }

  td.price {
    padding-right: 9px;
  }

  .price.outside {
    background: #ededed;
  }

  .volume {
    position: relative;
  }

  .bar {
    position: absolute;
    inset: 0 auto 0 0;
  }

  .pale {
    background: linear-gradient(90deg, #cfe1f1 12%, #b9d3eb 12% 35%, #aacbe8 35% 50%, #9fc3e5 50% 76%, #8fb8e1 76%);
  }

  .soft {
    background: linear-gradient(90deg, #bcd5ec 12%, #aacbe8 12% 40%, #9fc3e5 40% 80%, #8fb8e1 80%);
  }

  .full {
    background: linear-gradient(90deg, #9fc3e5 10%, #8fb8e1 10% 88%, #80afdd 88%);
  }

  .volume span {
    position: relative;
    padding-left: 4px;
  }

  .cut td {
    height: 5px;
    line-height: 5px;
  }

  .cut span {
    display: flex;
    align-items: flex-end;
    justify-content: center;
    height: 5px;
    overflow: hidden;
    line-height: 15px;
  }

  .cut .volume span {
    justify-content: flex-start;
  }

  .rest td {
    height: 5px;
    border-bottom: 0;
  }

  .last td {
    background: #f4d9ad;
  }

  .last .bid {
    background: #e7dcae;
  }

  .last .price {
    background: #a0a0a0;
    font-weight: 700;
  }

  .last .price::before, .last .price::after {
    display: inline-block;
    margin: 0 8px 0 9px;
  }

  .last .price::after {
    margin: 0 0 0 8px;
    border-width: 3px 3px 3px 0;
    border-right-color: #a8540a;
  }

  .last .ask {
    background: #e68a8a;
  }

  .last .bar {
    background: #8ba8b5;
  }

  .rail {
    display: flex;
    flex-direction: column;
    width: 19px;
    margin-right: 1px;
    background: #eee;
  }

  .rail-head {
    display: grid;
    place-items: center;
    height: 20px;
    padding-right: 3px;
    background: #e1e1e1;
  }

  .rail-tools {
    display: flex;
    flex-direction: column;
    align-items: center;
    gap: 6px;
    height: 71px;
    padding: 2px 2px 0 0;
    background: #e2e2e2;
  }

  .rail-track {
    display: flex;
    flex: 1;
    align-items: center;
  }

  .rail-track span {
    width: 20px;
    height: 8px;
    background: linear-gradient(#666 1px, transparent 1px 3px, #666 3px 4px, transparent 4px 6px, #666 6px 7px, transparent 7px) center / 6px 8px no-repeat #cacaca;
  }

  .rail-end {
    display: flex;
    flex-direction: column;
    align-items: center;
    justify-content: space-around;
    height: 32px;
    background: #e2e2e2;
  }

  .sidetabs {
    display: flex;
    flex-direction: column;
    width: 24px;
    border-left: 1px solid #9a9a9a;
    background: #b4b4b4;
  }

  .sidetabs button {
    padding: 9px 0 10px;
    border-bottom: 1px solid #999;
  }

  .sidetabs .active {
    background: #fafafa;
  }

  .sidetabs span {
    display: block;
    margin: auto;
    writing-mode: vertical-rl;
    transform: rotate(180deg);
  }
</style>
